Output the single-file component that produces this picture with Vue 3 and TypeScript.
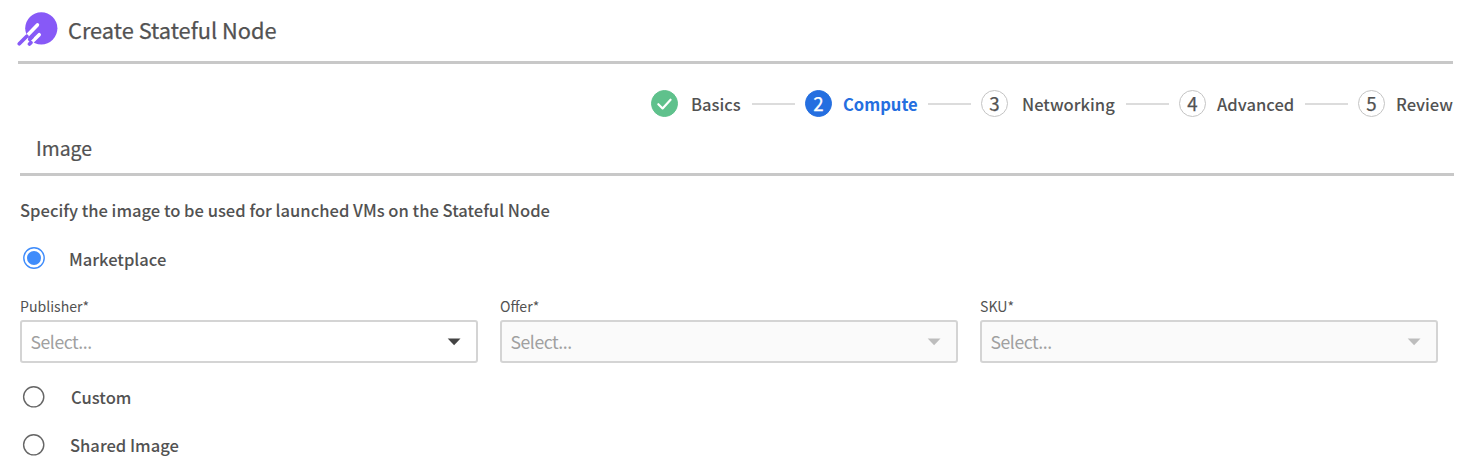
<script setup lang="ts">
import { ref } from 'vue'

interface Step {
  id: string
  label: string
  state: 'done' | 'current' | 'todo'
}

interface Field {
  label: string
  disabled: boolean
}

type Source = 'marketplace' | 'custom' | 'shared'

const steps: Step[] = [
  { id: 'basics', label: 'Basics', state: 'done' },
  { id: 'compute', label: 'Compute', state: 'current' },
  { id: 'networking', label: 'Networking', state: 'todo' },
  { id: 'advanced', label: 'Advanced', state: 'todo' },
  { id: 'review', label: 'Review', state: 'todo' },
]

const fields: Field[] = [
  { label: 'Publisher*', disabled: false },
  { label: 'Offer*', disabled: true },
  { label: 'SKU*', disabled: true },
]

const source = ref<Source>('marketplace')
</script>

<template>
  <main class="page">
    <header class="header">
      <svg class="logo" width="42" height="36" viewBox="0 0 42 36">
        <circle cx="24.3" cy="17.3" r="16.1" fill="#8759f7" />
        <g fill="none" stroke-linecap="round">
          <path d="M11 23.8 20.4 13.9M15.6 30.2 22.2 23.7" stroke="#fff" stroke-width="3.6" />
          <path d="M2.3 32.7 9.8 25.2M12.5 33 13.9 31.6M12.8 28.3 14.8 26.2" stroke="#8759f7" stroke-width="3.7" />
        </g>
      </svg>
      <h1 class="title">Create Stateful Node</h1>
    </header>

    <ol class="stepper">
      <li v-for="(step, i) in steps" :key="step.id" class="step" :class="[step.state, step.id]">
        <span class="bullet">
          <svg v-if="step.state === 'done'" width="26" height="26" viewBox="0 0 26 26">
            <path d="M6.6 13.2 11 17.6 19.3 8.6" fill="none" stroke="#fff" stroke-width="2.3" stroke-linecap="round" stroke-linejoin="round" />
          </svg>
          <span v-else class="number">{{ i + 1 }}</span>
        </span>
        <span class="step-label">{{ step.label }}</span>
        <span v-if="i < steps.length - 1" class="connector"></span>
      </li>
    </ol>

    <h2 class="section-title">Image</h2>
    <p class="hint">Specify the image to be used for launched VMs on the Stateful Node</p>

    <div class="option marketplace" @click="source = 'marketplace'">
      <svg class="radio" :class="{ on: source === 'marketplace' }" width="22" height="22" viewBox="0 0 22 22">
        <circle class="ring" cx="11" cy="11" r="10.2" />
        <circle v-if="source === 'marketplace'" class="dot" cx="11" cy="11" r="7" />
      </svg>
      <span class="option-label">Marketplace</span>
    </div>

    <div class="fields">
      <div v-for="field in fields" :key="field.label" class="field" :class="{ disabled: field.disabled }">
        <span class="field-label">{{ field.label }}</span>
        <div class="select">
          <span class="placeholder">Select...</span>
          <svg class="caret" width="14" height="8" viewBox="0 0 14 8">
            <path d="M.7.4h12.8L7.1 7.2z" fill="currentColor" />
          </svg>
        </div>
      </div>
    </div>

    <div class="option custom" @click="source = 'custom'">
      <svg class="radio" :class="{ on: source === 'custom' }" width="22" height="22" viewBox="0 0 22 22">
        <circle class="ring" cx="10.7" cy="10.8" r="10.1" />
        <circle v-if="source === 'custom'" class="dot" cx="10.7" cy="10.8" r="7" />
      </svg>
      <span class="option-label">Custom</span>
    </div>
    <div class="option shared" @click="source = 'shared'">
      <svg class="radio" :class="{ on: source === 'shared' }" width="22" height="22" viewBox="0 0 22 22">
        <circle class="ring" cx="10.7" cy="10.8" r="10.1" />
        <circle v-if="source === 'shared'" class="dot" cx="10.7" cy="10.8" r="7" />
      </svg>
      <span class="option-label">Shared Image</span>
    </div>
  </main>
</template>

<style>
body {
  margin: 0;
  background: #fff;
}
</style>

<style scoped>
.page {
  box-sizing: border-box;
  width: 1470px;
  height: 470px;
  overflow: hidden;
  background: #fff;
  color: #525252;
  font-family: "Noto Sans CJK SC", "Open Sans", sans-serif;
  font-size: 16.57px;
  font-weight: 500;
}
.header {
  box-sizing: border-box;
  display: flex;
  height: 64px;
  margin: 0 17px 0 18px;
  padding-top: 11px;
  border-bottom: 3px solid #c8c8c8;
}
.logo {
  flex: none;
  margin-left: -1px;
}
.title {
  margin: 0 0 0 9px;
  font-size: 21.8px;
  line-height: 37px;
  font-weight: 400;
  white-space: nowrap;
  -webkit-text-stroke: 0.25px currentColor;
}
.stepper {
  display: flex;
  justify-content: flex-end;
  height: 27px;
  margin: 26px 18px 0 0;
  padding: 0;
  list-style: none;
}
.step {
  display: flex;
  align-items: center;
}
.bullet {
  box-sizing: border-box;
  display: flex;
  align-items: center;
  justify-content: center;
  width: 27px;
  height: 27px;
  border: 1px solid #c4c4c4;
  border-radius: 50%;
  font-size: 18.7px;
  font-weight: 400;
  line-height: 25px;
  -webkit-text-stroke: 0.25px currentColor;
}
.number {
  padding-bottom: 2px;
}
.done .bullet {
  border-color: #5fc18c;
  background: #5fc18c;
}
.current .bullet {
  border-color: #256fe0;
  background: #256fe0;
  color: #fff;
}
.step-label {
  margin-left: 11px;
  padding-top: 2px;
  line-height: 25px;
  white-space: nowrap;
}
.basics .step-label {
  width: 50px;
  margin-left: 13px;
}
.compute .step-label {
  width: 74px;
  color: #256fe0;
  font-weight: 700;
}
.networking .step-label {
  width: 93px;
  margin-left: 14px;
}
.advanced .step-label {
  width: 77px;
}
.review .step-label {
  width: 56px;
}
.connector {
  width: 43px;
  height: 2px;
  margin: 0 10px 0 11px;
  background: #dcdcdc;
}
.section-title {
  box-sizing: border-box;
  height: 59px;
  margin: 0 16px 0 20px;
  padding: 16px 0 0 16px;
  border-bottom: 3px solid #c8c8c8;
  font-size: 19.4px;
  line-height: 30px;
  font-weight: 400;
  -webkit-text-stroke: 0.2px currentColor;
}
.hint {
  height: 30px;
  margin: 19px 0 0 20px;
  line-height: 30px;
  white-space: nowrap;
}
.option {
  display: flex;
  align-items: center;
  height: 24px;
  margin-left: 23px;
}
.marketplace {
  margin-top: 21px;
}
.radio {
  flex: none;
  overflow: visible;
}
.ring {
  fill: #fff;
  stroke: #666;
  stroke-width: 1.4;
}
.on .ring {
  stroke: #3f8cfb;
}
.dot {
  fill: #3f8cfb;
}
.option-label {
  margin: 0 0 1px 25px;
  line-height: 24px;
}
.marketplace .option-label {
  margin: 2px 0 0 24px;
}
.custom .option-label {
  margin-left: 26px;
}
.fields {
  display: flex;
  gap: 22px;
  margin: 25px 0 0 20px;
}
.field {
  width: 458px;
}
.field-label {
  display: block;
  height: 25px;
  font-size: 14.1px;
  line-height: 22px;
  font-weight: 400;
}
.select {
  box-sizing: border-box;
  display: flex;
  align-items: center;
  justify-content: space-between;
  height: 43px;
  padding: 0 15px 0 8.5px;
  border: 2px solid #d4d4d4;
  border-radius: 3px;
}
.placeholder {
  margin-bottom: 1px;
  color: #a0a0a0;
  font-weight: 400;
  font-size: 17.6px;
  letter-spacing: -0.45px;
}
.caret {
  color: #444;
}
.disabled .select {
  background: #fafafa;
}
.disabled .caret {
  color: #bdbdbd;
}
.custom {
  margin-top: 22px;
}
.shared {
  margin-top: 24px;
}
</style>
